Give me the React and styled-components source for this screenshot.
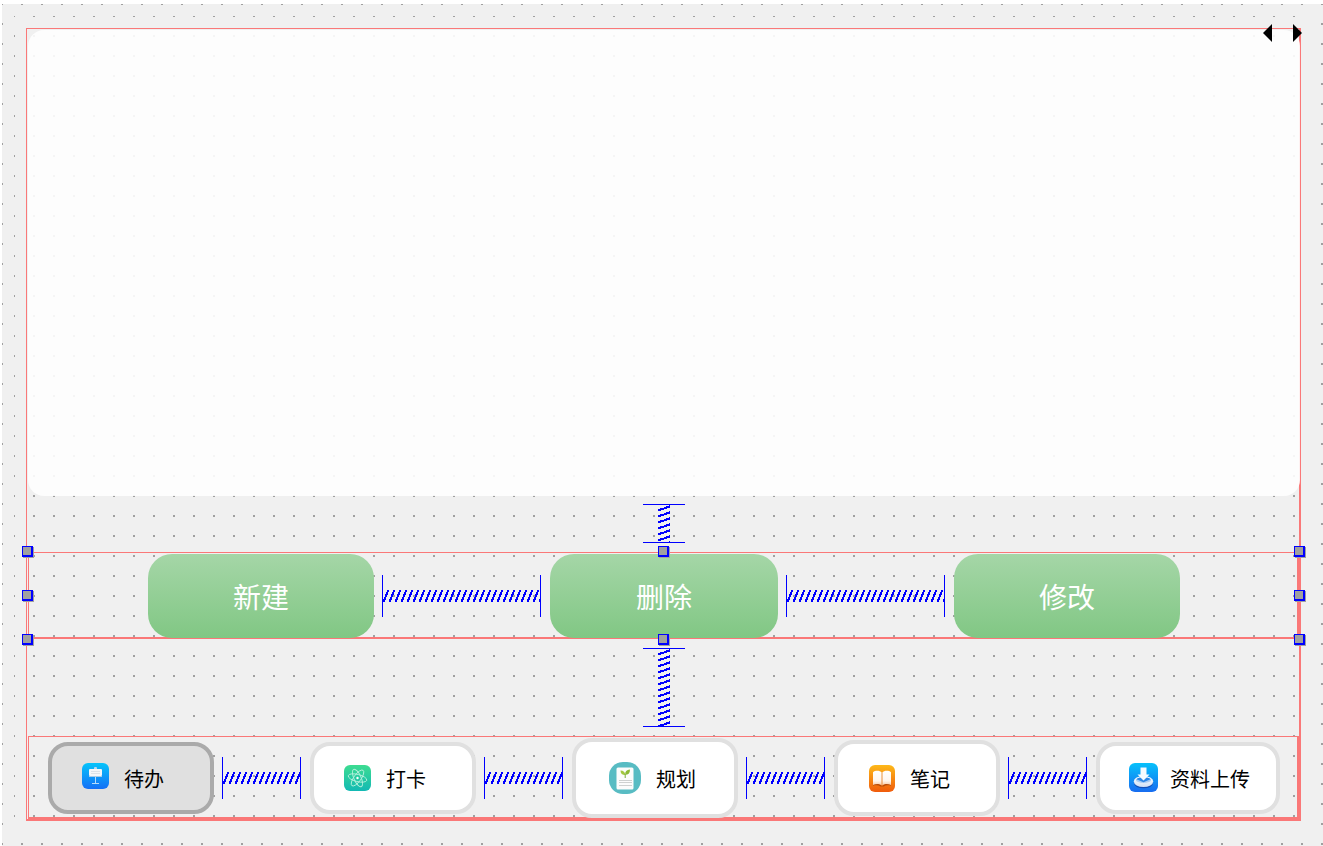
import React, { useState } from 'react';
import styled, { createGlobalStyle, css } from 'styled-components';

const RED = '#fa7878';
const BLUE = '#0000ff';

const GlobalStyle = createGlobalStyle`
  * { box-sizing: border-box; }
  body {
    margin: 0;
    background: #ffffff;
    font-family: "Noto Sans CJK SC", "Noto Sans", sans-serif;
  }
`;

const dotGrid = css`
  background-color: #f0f0f0;
  background-image: conic-gradient(from 270deg at 2px 2px, #a0a0a0 90deg, transparent 0);
  background-size: 20px 20px;
  background-position: -1px -1px;
`;

const Page = styled.div`
  display: flex;
  flex-direction: column;
  min-height: 100vh;
  padding: 4px 0 0 2px;
`;

const Form = styled.div`
  ${dotGrid}
  display: flex;
  flex: 1;
  flex-direction: column;
  padding: 12px 10px 13px 12px;
`;

const Central = styled.main`
  ${dotGrid}
  display: flex;
  flex: 1;
  flex-direction: column;
  padding: 12px;
`;

const Layout = styled.div`
  position: relative;
  display: flex;
  flex: 1;
  flex-direction: column;
  padding: 1px 0 0 1px;
  border: solid ${RED};
  border-width: 1px 2px 2px 1px;
`;

const Stack = styled.section`
  position: relative;
  flex: 1;
  min-height: 200px;
  margin-right: -1px;
  border-radius: 16px;
  background: rgba(254, 254, 254, 0.9);
`;

const Row = styled.div`
  position: relative;
  border: solid ${RED};
  border-width: 1px 2px 2px 1px;
`;

const Items = styled.div`
  position: relative;
  display: flex;
  align-items: center;
  gap: 8px;
  margin-bottom: -1px;
  padding: 1px ${(p) => p.$right}px 0 ${(p) => p.$left}px;
`;

const ActionButton = styled.button`
  flex: 1 1 ${(p) => p.$basis}px;
  height: 84px;
  padding: 0;
  border: 0;
  border-radius: 24px;
  background: linear-gradient(#a5d6a7, #81c784);
  color: #ffffff;
  font: 400 28px/40px "Noto Sans CJK SC", sans-serif;
`;

const TabButton = styled.button`
  display: flex;
  flex: 1 1 ${(p) => p.$basis}px;
  align-items: center;
  gap: 12px;
  padding: 16px 0 16px 28px;
  border: 4px solid ${(p) => (p.$active ? '#aaaaaa' : '#e0e0e0')};
  border-radius: 20px;
  background: ${(p) => (p.$active ? '#e0e0e0' : '#ffffff')};
  color: #000000;
  font: 400 20px/30px "Noto Sans CJK SC", sans-serif;
  white-space: nowrap;
`;

const TabLabel = styled.span`
  padding-top: 2px;
`;

const IconSlot = styled.span`
  display: flex;
  flex: none;
  align-items: center;
  justify-content: center;
  width: ${(p) => p.$width}px;
  height: ${(p) => p.$height}px;
`;

const HSpring = styled.div`
  flex: 0 1 ${(p) => p.$length}px;
  height: 42px;
  margin-right: 1px;
  border: solid ${BLUE};
  border-width: 0 1px;
`;

const VSpring = styled.div`
  align-self: center;
  width: 42px;
  height: ${(p) => p.$length}px;
  margin: ${(p) => p.$before}px 0 9px;
  border: solid ${BLUE};
  border-width: 1px 0;
`;

const Coil = styled.svg`
  display: block;
  width: 100%;
  height: 100%;
`;

const Handle = styled.span`
  position: absolute;
  z-index: 2;
  left: ${(p) => p.$x};
  top: ${(p) => p.$y};
  width: 11px;
  height: 11px;
  border: solid ${BLUE};
  border-width: 1px 2px 2px 1px;
  background: #a0a0a0;
  box-shadow: 1px 1px 0 #a0a0a0;
`;

const Pager = styled.div`
  position: absolute;
  z-index: 2;
  top: -5px;
  right: -3px;
  display: flex;
  gap: 21px;
`;

const PagerButton = styled.button`
  width: 9px;
  height: 18px;
  padding: 0;
  border: 0;
  background: none;

  svg { display: block; }
`;

function HorizontalSpacer({ length }) {
  return (
    <HSpring $length={length}>
      <Coil aria-hidden="true">
        <defs>
          <pattern id="coil-h" width="6" height="42" patternUnits="userSpaceOnUse">
            <path
              d="M0 24h2v3h-2zM1 22h2v3h-2zM2 19h2v3h-2zM3 17h2v3h-2zM4 15h2v2h-2z"
              fill={BLUE}
              shapeRendering="crispEdges"
            />
          </pattern>
        </defs>
        <rect width="100%" height="42" fill="url(#coil-h)" />
      </Coil>
    </HSpring>
  );
}

function VerticalSpacer({ length, before }) {
  return (
    <VSpring $length={length} $before={before}>
      <Coil aria-hidden="true">
        <defs>
          <pattern id="coil-v" width="42" height="6" patternUnits="userSpaceOnUse">
            <path
              d="M15 4h3v2h-3zM17 3h4v2h-4zM21 2h3v2h-3zM23 1h4v2h-4zM26 0h1v2h-1z"
              fill={BLUE}
              shapeRendering="crispEdges"
            />
          </pattern>
        </defs>
        <rect width="42" height="100%" fill="url(#coil-v)" />
      </Coil>
    </VSpring>
  );
}

function TodoIcon() {
  return (
    <svg width="28" height="30" viewBox="0 0 28 30" aria-hidden="true">
      <defs>
        <linearGradient id="todo-bg" x2="0" y2="1">
          <stop offset="0" stopColor="#05c4fb" />
          <stop offset="1" stopColor="#1570f6" />
        </linearGradient>
      </defs>
      <rect width="27" height="26" rx="6" fill="url(#todo-bg)" />
      <rect x="12" y="4" width="3" height="3" rx="1" fill="#b9d9ee" />
      <rect x="7" y="6" width="13" height="7" rx="1" fill="#f5f7f9" />
      <path d="M9 8.5h9M9 10.5h9" stroke="#dde3e8" />
      <path d="M7 13.5h13" stroke="#a9cbe6" />
      <path d="M13.5 14v6.5M10 20.5h7" stroke="#b5dbfb" />
    </svg>
  );
}

function AtomIcon() {
  return (
    <svg width="28" height="26" viewBox="0 0 28 26" aria-hidden="true">
      <defs>
        <linearGradient id="atom-bg" x2="0" y2="1">
          <stop offset="0" stopColor="#3ddc91" />
          <stop offset="1" stopColor="#13b9b4" />
        </linearGradient>
      </defs>
      <rect width="27" height="26" rx="6" fill="url(#atom-bg)" />
      <g fill="none" stroke="#b4f0dc" strokeWidth="0.9">
        <ellipse cx="13.5" cy="13" rx="9.5" ry="3.6" transform="rotate(14 13.5 13)" />
        <ellipse cx="13.5" cy="13" rx="9.5" ry="3.6" transform="rotate(66 13.5 13)" />
        <ellipse cx="13.5" cy="13" rx="9.5" ry="3.6" transform="rotate(126 13.5 13)" />
      </g>
      <circle cx="13.5" cy="13" r="1.2" fill="#ffffff" />
    </svg>
  );
}

function PlanIcon() {
  return (
    <svg width="34" height="32" viewBox="-2 0 34 32" aria-hidden="true">
      <rect width="32" height="32" rx="14" fill="#58bcc3" />
      <rect x="7.5" y="5.5" width="17" height="22" rx="1.5" fill="#fcfcfc" />
      <path d="M11.5 8.5c3 0 4.7 1.5 4.7 4.5c-3 0-4.7-1.5-4.7-4.5z" fill="#a3c740" />
      <path d="M21 7.5c-3.5.2-5 2-4.8 5.3c3.3 0 4.9-1.8 4.8-5.3z" fill="#8cba35" />
      <path d="M16.2 12v4" stroke="#7caf3b" />
      <path d="M10 18.5h13M10 20.5h13M10 23.5h13" stroke="#cfd1d1" />
    </svg>
  );
}

function BookIcon() {
  return (
    <svg width="26" height="27" viewBox="0 0 26 27" aria-hidden="true">
      <defs>
        <linearGradient id="book-bg" x2="0" y2="1">
          <stop offset="0" stopColor="#fdb919" />
          <stop offset="1" stopColor="#f05b0c" />
        </linearGradient>
        <linearGradient id="book-page" x2="0" y2="1">
          <stop offset="0" stopColor="#ffffff" />
          <stop offset="0.7" stopColor="#fff6ee" />
          <stop offset="1" stopColor="#f6c9a4" />
        </linearGradient>
      </defs>
      <rect width="26" height="27" rx="6" fill="url(#book-bg)" />
      <path d="M4 19.5c3-1.2 6.5-1 9 1.5c2.5-2.500 6-2.700 9-1.500v1.300c-3-.8-5.500-.5-7.300.7h-3.400c-1.800-1.200-4.300-1.500-7.300-.7z" fill="#b94c0b" />
      <path d="M4 7.2c2.2-1.800 6.800-1.900 8.700.4v12.600c-2.200-1.500-6-1.700-8.700-.3z" fill="url(#book-page)" />
      <path d="M22 7.2c-2.200-1.800-6.800-1.900-8.700.4v12.600c2.200-1.500 6-1.700 8.700-.3z" fill="url(#book-page)" />
      <path d="M13 7.5v12.800" stroke="#e9a56e" strokeWidth="0.8" />
    </svg>
  );
}

function UploadIcon() {
  return (
    <svg width="30" height="30" viewBox="-1 0 30 30" aria-hidden="true">
      <defs>
        <linearGradient id="up-bg" x2="0" y2="1">
          <stop offset="0" stopColor="#06c1fb" />
          <stop offset="1" stopColor="#176cf0" />
        </linearGradient>
        <linearGradient id="up-disc" x2="0" y2="1">
          <stop offset="0" stopColor="#ffffff" />
          <stop offset="1" stopColor="#cfe0f5" />
        </linearGradient>
      </defs>
      <rect width="29" height="29" rx="6" fill="url(#up-bg)" />
      <ellipse cx="14.5" cy="20.5" rx="9.5" ry="4.8" fill="#1450b8" />
      <ellipse cx="14.5" cy="18.5" rx="9.7" ry="5.5" fill="url(#up-disc)" />
      <ellipse cx="14.5" cy="17" rx="7.6" ry="3" fill="#a9cdf4" />
      <path d="M7.500 16.200a7.600 3 0 0 1 14 0l-7 3z" fill="#2b86e6" />
      <path d="M11.5 4.500h6v7h3L14.500 17.500L8.500 11.500h3z" fill="#f6fbff" />
    </svg>
  );
}

const TABS = [
  { label: '待办', Icon: TodoIcon, width: 32, height: 32, basis: 166 },
  { label: '打卡', Icon: AtomIcon, width: 32, height: 32, basis: 166 },
  { label: '规划', Icon: PlanIcon, width: 40, height: 40, basis: 166 },
  { label: '笔记', Icon: BookIcon, width: 32, height: 36, basis: 166 },
  { label: '资料上传', Icon: UploadIcon, width: 30, height: 32, basis: 184 },
];

const ACTIONS = [
  { label: '新建', basis: 226 },
  { label: '删除', basis: 228 },
  { label: '修改', basis: 226 },
];

const HANDLES = [
  ['-7px', '-7px'],
  ['calc(50% - 5px)', '-7px'],
  ['calc(100% - 3px)', '-7px'],
  ['-7px', 'calc(50% - 5px)'],
  ['calc(100% - 3px)', 'calc(50% - 5px)'],
  ['-7px', 'calc(100% - 3px)'],
  ['calc(50% - 5px)', 'calc(100% - 3px)'],
  ['calc(100% - 3px)', 'calc(100% - 3px)'],
];

export default function App() {
  const [active, setActive] = useState(0);

  return (
    <>
      <GlobalStyle />
      <Page>
        <Form>
          <Central>
            <Layout>
              <Stack />
              <Pager>
                <PagerButton type="button" aria-label="上一页">
                  <svg width="9" height="18" aria-hidden="true">
                    <path d="M9 0v18L0 9z" />
                  </svg>
                </PagerButton>
                <PagerButton type="button" aria-label="下一页">
                  <svg width="9" height="18" aria-hidden="true">
                    <path d="M0 0v18L9 9z" />
                  </svg>
                </PagerButton>
              </Pager>
              <VerticalSpacer length={39} before={8} />
              <Row>
                <Items $left={119} $right={117}>
                  {ACTIONS.map(({ label, basis }, i) => (
                    <React.Fragment key={label}>
                      {i > 0 && <HorizontalSpacer length={159} />}
                      <ActionButton type="button" $basis={basis}>{label}</ActionButton>
                    </React.Fragment>
                  ))}
                </Items>
                {HANDLES.map(([x, y]) => (
                  <Handle key={x + y} $x={x} $y={y} />
                ))}
              </Row>
              <VerticalSpacer length={79} before={9} />
              <Row as="nav">
                <Items $left={19} $right={17}>
                  {TABS.map(({ label, Icon, width, height, basis }, i) => (
                    <React.Fragment key={label}>
                      {i > 0 && <HorizontalSpacer length={79} />}
                      <TabButton
                        type="button"
                        $basis={basis}
                        $active={i === active}
                        aria-pressed={i === active}
                        onClick={() => setActive(i)}
                      >
                        <IconSlot $width={width} $height={height}>
                          <Icon />
                        </IconSlot>
                        <TabLabel>{label}</TabLabel>
                      </TabButton>
                    </React.Fragment>
                  ))}
                </Items>
              </Row>
            </Layout>
          </Central>
        </Form>
      </Page>
    </>
  );
}
